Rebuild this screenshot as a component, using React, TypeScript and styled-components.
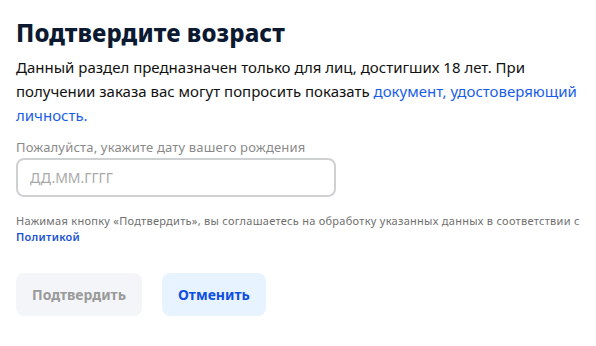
import React from 'react';
import styled, { createGlobalStyle } from 'styled-components';

const GlobalStyle = createGlobalStyle`
  html, body {
    margin: 0;
    padding: 0;
    background: #ffffff;
  }
  body {
    font-family: 'Noto Sans', 'Open Sans', sans-serif;
  }
`;

const Wrap = styled.div`
  padding: 18px 10px 0 16px;
`;

const Title = styled.h1`
  margin: 0;
  font-size: 24px;
  line-height: 30px;
  font-weight: 800;
  color: #0b1a31;
  letter-spacing: 0.1px;
`;

const Lead = styled.p`
  margin: 7px 0 0;
  font-size: 15px;
  line-height: 24px;
  color: #111;
`;

const Link = styled.a<{ small?: boolean }>`
  color: ${({ small }) => (small ? '#1a53d0' : '#1a5ee8')};
  text-decoration: none;
  font-weight: ${({ small }) => (small ? 600 : 400)};
`;

const Label = styled.div`
  margin-top: 11px;
  font-size: 13px;
  line-height: 18px;
  letter-spacing: 0.18px;
  color: #8a8a8a;
`;

const Input = styled.input`
  box-sizing: border-box;
  display: block;
  margin-top: 2px;
  width: 320px;
  height: 39px;
  border: 2px solid #cfd0d2;
  border-radius: 8px;
  padding: 0 12px;
  font-family: inherit;
  font-size: 14px;
  color: #111;
  outline: none;
  &::placeholder {
    color: #a9a9a9;
  }
`;

const Note = styled.p`
  margin: 16px 0 0;
  font-size: 11px;
  line-height: 16px;
  letter-spacing: 0.28px;
  color: #6f6f6f;
`;

const Actions = styled.div`
  display: flex;
  gap: 20px;
  margin-top: 28px;
`;

const Button = styled.button<{ primary?: boolean }>`
  height: 43px;
  padding: 0 16px;
  border: none;
  border-radius: 8px;
  font-family: inherit;
  font-size: 14px;
  font-weight: 700;
  cursor: pointer;
  background: ${({ primary }) => (primary ? '#e7f4ff' : '#f3f5f8')};
  color: ${({ primary }) => (primary ? '#0f4fe0' : '#9a9a9a')};
`;

export default function App() {
  return (
    <>
      <GlobalStyle />
      <Wrap>
        <Title>Подтвердите возраст</Title>
        <Lead>
          Данный раздел предназначен только для лиц, достигших 18 лет. При
          получении заказа вас могут попросить показать{' '}
          <Link href="#">документ, удостоверяющий личность.</Link>
        </Lead>
        <Label>Пожалуйста, укажите дату вашего рождения</Label>
        <Input placeholder="ДД.ММ.ГГГГ" />
        <Note>
          Нажимая кнопку «Подтвердить», вы соглашаетесь на обработку указанных
          данных в соответствии с <Link href="#" small>Политикой</Link>
        </Note>
        <Actions>
          <Button disabled>Подтвердить</Button>
          <Button primary>Отменить</Button>
        </Actions>
      </Wrap>
    </>
  );
}
